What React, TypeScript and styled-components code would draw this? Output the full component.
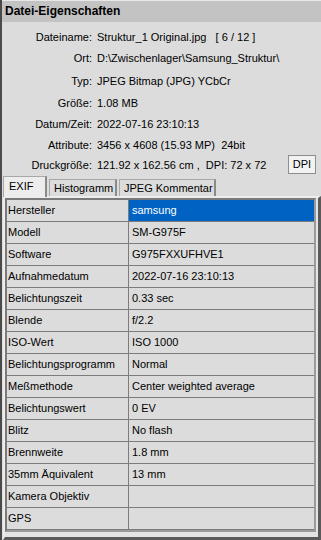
import { createGlobalStyle } from 'styled-components';
import styled from 'styled-components';

const GlobalStyle = createGlobalStyle`
    html, body {
        margin: 0;
        padding: 0;
        background: #dcdcdc;
    }
    body {
        font-family: 'Liberation Sans', Arial, sans-serif;
        font-size: 11px;
        color: #000;
    }
`;

const Panel = styled.div`
    width: 321px;
    height: 540px;
    box-sizing: border-box;
    background: #dcdcdc;
    border-left: 2px solid #4a4a4a;
    display: flex;
    flex-direction: column;
    overflow: hidden;
`;

const Header = styled.div`
    height: 22px;
    flex-shrink: 0;
    box-sizing: border-box;
    border-top: 1px solid #e8e8e8;
    background: #c3c3c3;
    font-weight: bold;
    font-size: 12px;
    line-height: 21px;
    padding-left: 3px;
`;

const InfoGrid = styled.div`
    display: grid;
    grid-template-columns: 90px 1fr;
    column-gap: 5px;
    padding: 5px 5px 0 0;
`;

const Label = styled.div<{ $h: number }>`
    height: ${(p) => p.$h}px;
    line-height: ${(p) => p.$h}px;
    text-align: right;
    white-space: nowrap;
`;

const Value = styled.div<{ $h: number }>`
    height: ${(p) => p.$h}px;
    line-height: ${(p) => p.$h}px;
    white-space: nowrap;
    display: flex;
    align-items: center;
    justify-content: space-between;
`;

const DpiButton = styled.button`
    font-family: inherit;
    font-size: 11px;
    width: 28px;
    height: 19px;
    padding: 0;
    margin-top: -1px;
    background: #f2f2f2;
    border: 1px solid #8e8e8e;
    border-radius: 0;
    line-height: 15px;
`;

const TabStrip = styled.div`
    display: flex;
    align-items: flex-end;
    height: 20px;
    padding-left: 1px;
    margin-top: 1px;
    gap: 2px;
`;

const Tab = styled.div<{ $active?: boolean; $w: number }>`
    box-sizing: border-box;
    width: ${(p) => p.$w}px;
    height: ${(p) => (p.$active ? 21 : 17)}px;
    line-height: ${(p) => (p.$active ? 19 : 16)}px;
    padding-left: ${(p) => (p.$active ? 5 : 4)}px;
    background: ${(p) => (p.$active ? '#ededed' : '#dcdcdc')};
    border: 1px solid #a8a8a8;
    border-bottom: none;
    border-right: 2px solid #8a8a8a;
    margin-bottom: ${(p) => (p.$active ? -1 : 0)}px;
    position: relative;
    z-index: ${(p) => (p.$active ? 1 : 0)};
    white-space: nowrap;
    overflow: hidden;
`;

const TableFrame = styled.div`
    margin: 0 0 0 1px;
    flex: 1;
    box-sizing: border-box;
    border: 2px solid #ececec;
    border-right: 3px solid #5a5a5a;
    border-bottom: 3px solid #5a5a5a;
    background: #e4e4e4;
    padding: 0 2px 2px 0;
`;

const Table = styled.div`
    border: 2px solid #7a7a7a;
    border-right-color: #9a9a9a;
    border-bottom-color: #9a9a9a;
    display: grid;
    grid-template-columns: 122px 1fr;
`;

const Cell = styled.div<{ $selected?: boolean; $first?: boolean }>`
    height: 22px;
    box-sizing: border-box;
    line-height: 21px;
    padding-left: ${(p) => (p.$first ? 1 : 3)}px;
    border-bottom: 1px solid #7c7c7c;
    border-right: ${(p) => (p.$first ? '1px solid #7c7c7c' : 'none')};
    background: ${(p) => (p.$selected ? '#0063c4' : '#dcdcdc')};
    color: ${(p) => (p.$selected ? '#ffffff' : '#000')};
    white-space: nowrap;
    overflow: hidden;
`;

const info: { label: string; value: string; h: number; dpi?: boolean }[] = [
    { label: 'Dateiname:', value: 'Struktur_1 Original.jpg\u00a0\u00a0\u00a0[ 6 / 12 ]', h: 21 },
    { label: 'Ort:', value: 'D:\\Zwischenlager\\Samsung_Struktur\\', h: 21 },
    { label: 'Typ:', value: 'JPEG Bitmap (JPG) YCbCr', h: 24 },
    { label: 'Größe:', value: '1.08 MB', h: 21 },
    { label: 'Datum/Zeit:', value: '2022-07-16 23:10:13', h: 21 },
    { label: 'Attribute:', value: '3456 x 4608 (15.93 MP)\u00a0\u00a024bit', h: 20 },
    { label: 'Druckgröße:', value: '121.92 x 162.56 cm ,\u00a0 DPI: 72 x 72', h: 20, dpi: true },
];

const exif: [string, string][] = [
    ['Hersteller', 'samsung'],
    ['Modell', 'SM-G975F'],
    ['Software', 'G975FXXUFHVE1'],
    ['Aufnahmedatum', '2022-07-16 23:10:13'],
    ['Belichtungszeit', '0.33 sec'],
    ['Blende', 'f/2.2'],
    ['ISO-Wert', 'ISO 1000'],
    ['Belichtungsprogramm', 'Normal'],
    ['Meßmethode', 'Center weighted average'],
    ['Belichtungswert', '0 EV'],
    ['Blitz', 'No flash'],
    ['Brennweite', '1.8 mm'],
    ['35mm Äquivalent', '13 mm'],
    ['Kamera Objektiv', ''],
    ['GPS', ''],
];

export default function App() {
    return (
        <>
            <GlobalStyle />
            <Panel>
                <Header>Datei-Eigenschaften</Header>
                <InfoGrid>
                    {info.map((row) => (
                        <>
                            <Label key={row.label} $h={row.h}>
                                {row.label}
                            </Label>
                            <Value $h={row.h}>
                                <span>{row.value}</span>
                                {row.dpi && <DpiButton>DPI</DpiButton>}
                            </Value>
                        </>
                    ))}
                </InfoGrid>
                <TabStrip>
                    <Tab $active $w={44}>
                        EXIF
                    </Tab>
                    <Tab $w={68}>Histogramm</Tab>
                    <Tab $w={97}>JPEG Kommentar</Tab>
                </TabStrip>
                <TableFrame>
                    <Table>
                        {exif.map(([k, v], i) => (
                            <>
                                <Cell key={k} $first>
                                    {k}
                                </Cell>
                                <Cell $selected={i === 0}>{v}</Cell>
                            </>
                        ))}
                    </Table>
                </TableFrame>
            </Panel>
        </>
    );
}
